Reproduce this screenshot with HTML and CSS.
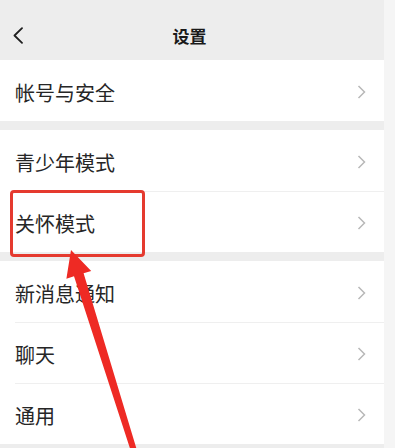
FILE: index.html
```html
<!DOCTYPE html>
<html lang="zh-CN">
<head>
<meta charset="utf-8">
<title>设置</title>
<link rel="stylesheet" href="styles.css">
</head>
<body>
<div class="screen">
  <div class="page">
    <header class="header">
      <span class="back">
        <svg width="12" height="17" viewBox="0 0 12 17"><path d="M10 1.2 L2.5 8.5 L10 15.8" fill="none" stroke="#1f1f1f" stroke-width="1.8" stroke-linecap="round" stroke-linejoin="round"/></svg>
      </span>
      <span class="title">设置</span>
      <span></span>
    </header>

    <section class="group">
      <div class="row"><span class="label">帐号与安全</span><span class="chev"><svg width="9" height="14" viewBox="0 0 9 14"><path d="M1.5 1 L7.5 7 L1.5 13" fill="none" stroke="#b8b8b8" stroke-width="1.5"/></svg></span></div>
    </section>

    <section class="group">
      <div class="row"><span class="label">青少年模式</span><span class="chev"><svg width="9" height="14" viewBox="0 0 9 14"><path d="M1.5 1 L7.5 7 L1.5 13" fill="none" stroke="#b8b8b8" stroke-width="1.5"/></svg></span></div>
      <div class="row"><span class="label">关怀模式</span><span class="chev"><svg width="9" height="14" viewBox="0 0 9 14"><path d="M1.5 1 L7.5 7 L1.5 13" fill="none" stroke="#b8b8b8" stroke-width="1.5"/></svg></span></div>
    </section>

    <section class="group">
      <div class="row"><span class="label">新消息通知</span><span class="chev"><svg width="9" height="14" viewBox="0 0 9 14"><path d="M1.5 1 L7.5 7 L1.5 13" fill="none" stroke="#b8b8b8" stroke-width="1.5"/></svg></span></div>
      <div class="row"><span class="label">聊天</span><span class="chev"><svg width="9" height="14" viewBox="0 0 9 14"><path d="M1.5 1 L7.5 7 L1.5 13" fill="none" stroke="#b8b8b8" stroke-width="1.5"/></svg></span></div>
      <div class="row"><span class="label">通用</span><span class="chev"><svg width="9" height="14" viewBox="0 0 9 14"><path d="M1.5 1 L7.5 7 L1.5 13" fill="none" stroke="#b8b8b8" stroke-width="1.5"/></svg></span></div>
    </section>
  </div>
  <div class="strip"></div>

  <div class="highlight"></div>
  <svg class="arrow" width="395" height="448" viewBox="0 0 395 448">
    <polygon points="71,250 91.2,270.9 83.6,273.3 136.7,449.4 130.9,451.2 74,276.3 66.4,278.7" fill="#ee2a24"/>
  </svg>
</div>
</body>
</html>
```

FILE: styles.css
```css
* { box-sizing: border-box; }

html, body {
  margin: 0;
  padding: 0;
}

body {
  width: 395px;
  height: 448px;
  overflow: hidden;
  background: #ededed;
  font-family: "Noto Sans CJK SC", "Noto Sans", sans-serif;
}

.screen {
  position: relative;
  display: flex;
  width: 395px;
  height: 448px;
  overflow: hidden;
}

.page {
  width: 384px;
  height: 448px;
  background: #ededed;
  display: flex;
  flex-direction: column;
  flex-shrink: 0;
}

.strip {
  flex: 1;
  background: #f5f5f5;
}

.header {
  flex-shrink: 0;
  height: 60px;
  padding: 10px 5px 0 0;
  display: grid;
  grid-template-columns: 1fr auto 1fr;
  align-items: center;
}

.back {
  display: flex;
  align-items: center;
  padding-left: 12px;
}

.title {
  font-size: 17px;
  font-weight: 600;
  color: #1a1a1a;
}

.group {
  flex-shrink: 0;
  background: #fff;
  margin-bottom: 9px;
}

.row {
  height: 61px;
  margin-left: 15px;
  padding-right: 18px;
  display: flex;
  align-items: center;
  justify-content: space-between;
}

.row + .row {
  border-top: 1px solid #efefef;
}

.label {
  font-size: 20px;
  color: #262626;
  padding-top: 3px;
}

.chev {
  display: flex;
  align-items: center;
  padding-top: 2px;
}

.highlight {
  position: absolute;
  left: 10px;
  top: 190px;
  width: 135px;
  height: 67px;
  border: 3px solid #e53a2f;
  border-radius: 4px;
}

.arrow {
  position: absolute;
  left: 0;
  top: 0;
  pointer-events: none;
}
```
